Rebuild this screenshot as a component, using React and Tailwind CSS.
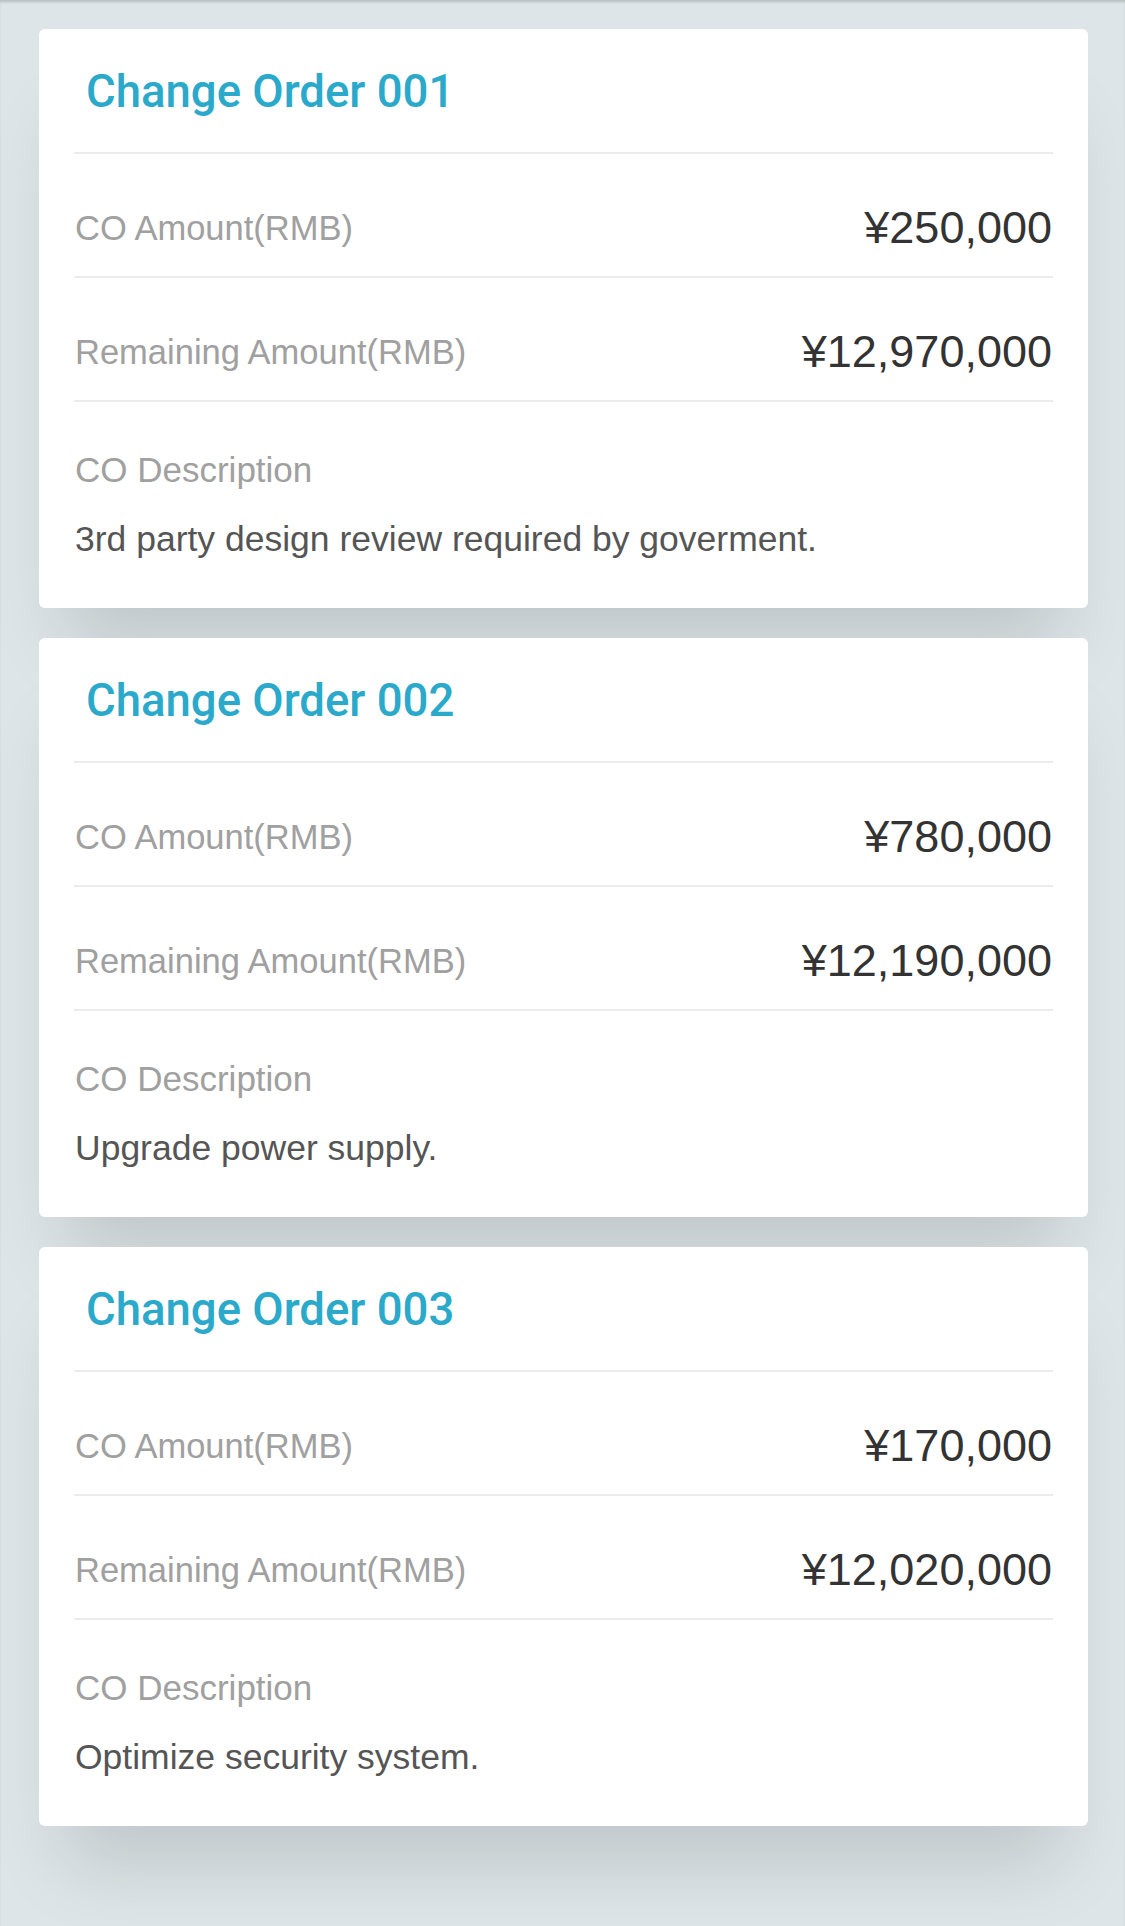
import React from "react";

const ORDERS = [
  {
    id: "001",
    amount: "¥250,000",
    remaining: "¥12,970,000",
    desc: "3rd party design review required by goverment.",
  },
  {
    id: "002",
    amount: "¥780,000",
    remaining: "¥12,190,000",
    desc: "Upgrade power supply.",
  },
  {
    id: "003",
    amount: "¥170,000",
    remaining: "¥12,020,000",
    desc: "Optimize security system.",
  },
];

function Row({ label, value }) {
  return (
    <div className="mx-[35px] h-[124px] border-t-2 border-[#ececec] pt-[26px] pl-[1px] pr-[1px] flex items-center justify-between">
      <span className="text-[34.5px] leading-[46px] text-[#a0a0a0]">{label}</span>
      <span className="text-[45px] leading-[56px] text-[#333333]">{value}</span>
    </div>
  );
}

function OrderCard({ order }) {
  return (
    <div className="bg-white rounded-[6px] shadow-[0_64px_70px_-25px_rgba(0,0,0,0.13)]">
      {/* header */}
      <div className="h-[123px] pt-[3px] pl-[47px] flex items-center">
        <h2 className="font-['Roboto',sans-serif] font-medium text-[45.5px] leading-none text-[#2aa9cb]">
          Change Order {order.id}
        </h2>
      </div>

      <Row label="CO Amount(RMB)" value={order.amount} />
      <Row label="Remaining Amount(RMB)" value={order.remaining} />

      {/* description */}
      <div className="mx-[35px] border-t-2 border-[#ececec] pt-[45px] pb-[46px] pl-[1px]">
        <p className="text-[35px] leading-[46px] text-[#a0a0a0]">CO Description</p>
        <p className="mt-[23px] text-[35.5px] leading-[46px] text-[#555555]">{order.desc}</p>
      </div>
    </div>
  );
}

export default function App() {
  return (
    <div className="min-h-[1926px] bg-[#dde5e8] pt-[29px] pl-[39px] pr-[37px] pb-[60px] font-['Liberation_Sans',Arial,sans-serif] shadow-[inset_0_3px_3px_-1px_rgba(0,0,0,0.18)]">
      <div className="flex flex-col gap-[30px]">
        {ORDERS.map((o) => (
          <OrderCard key={o.id} order={o} />
        ))}
      </div>
    </div>
  );
}
